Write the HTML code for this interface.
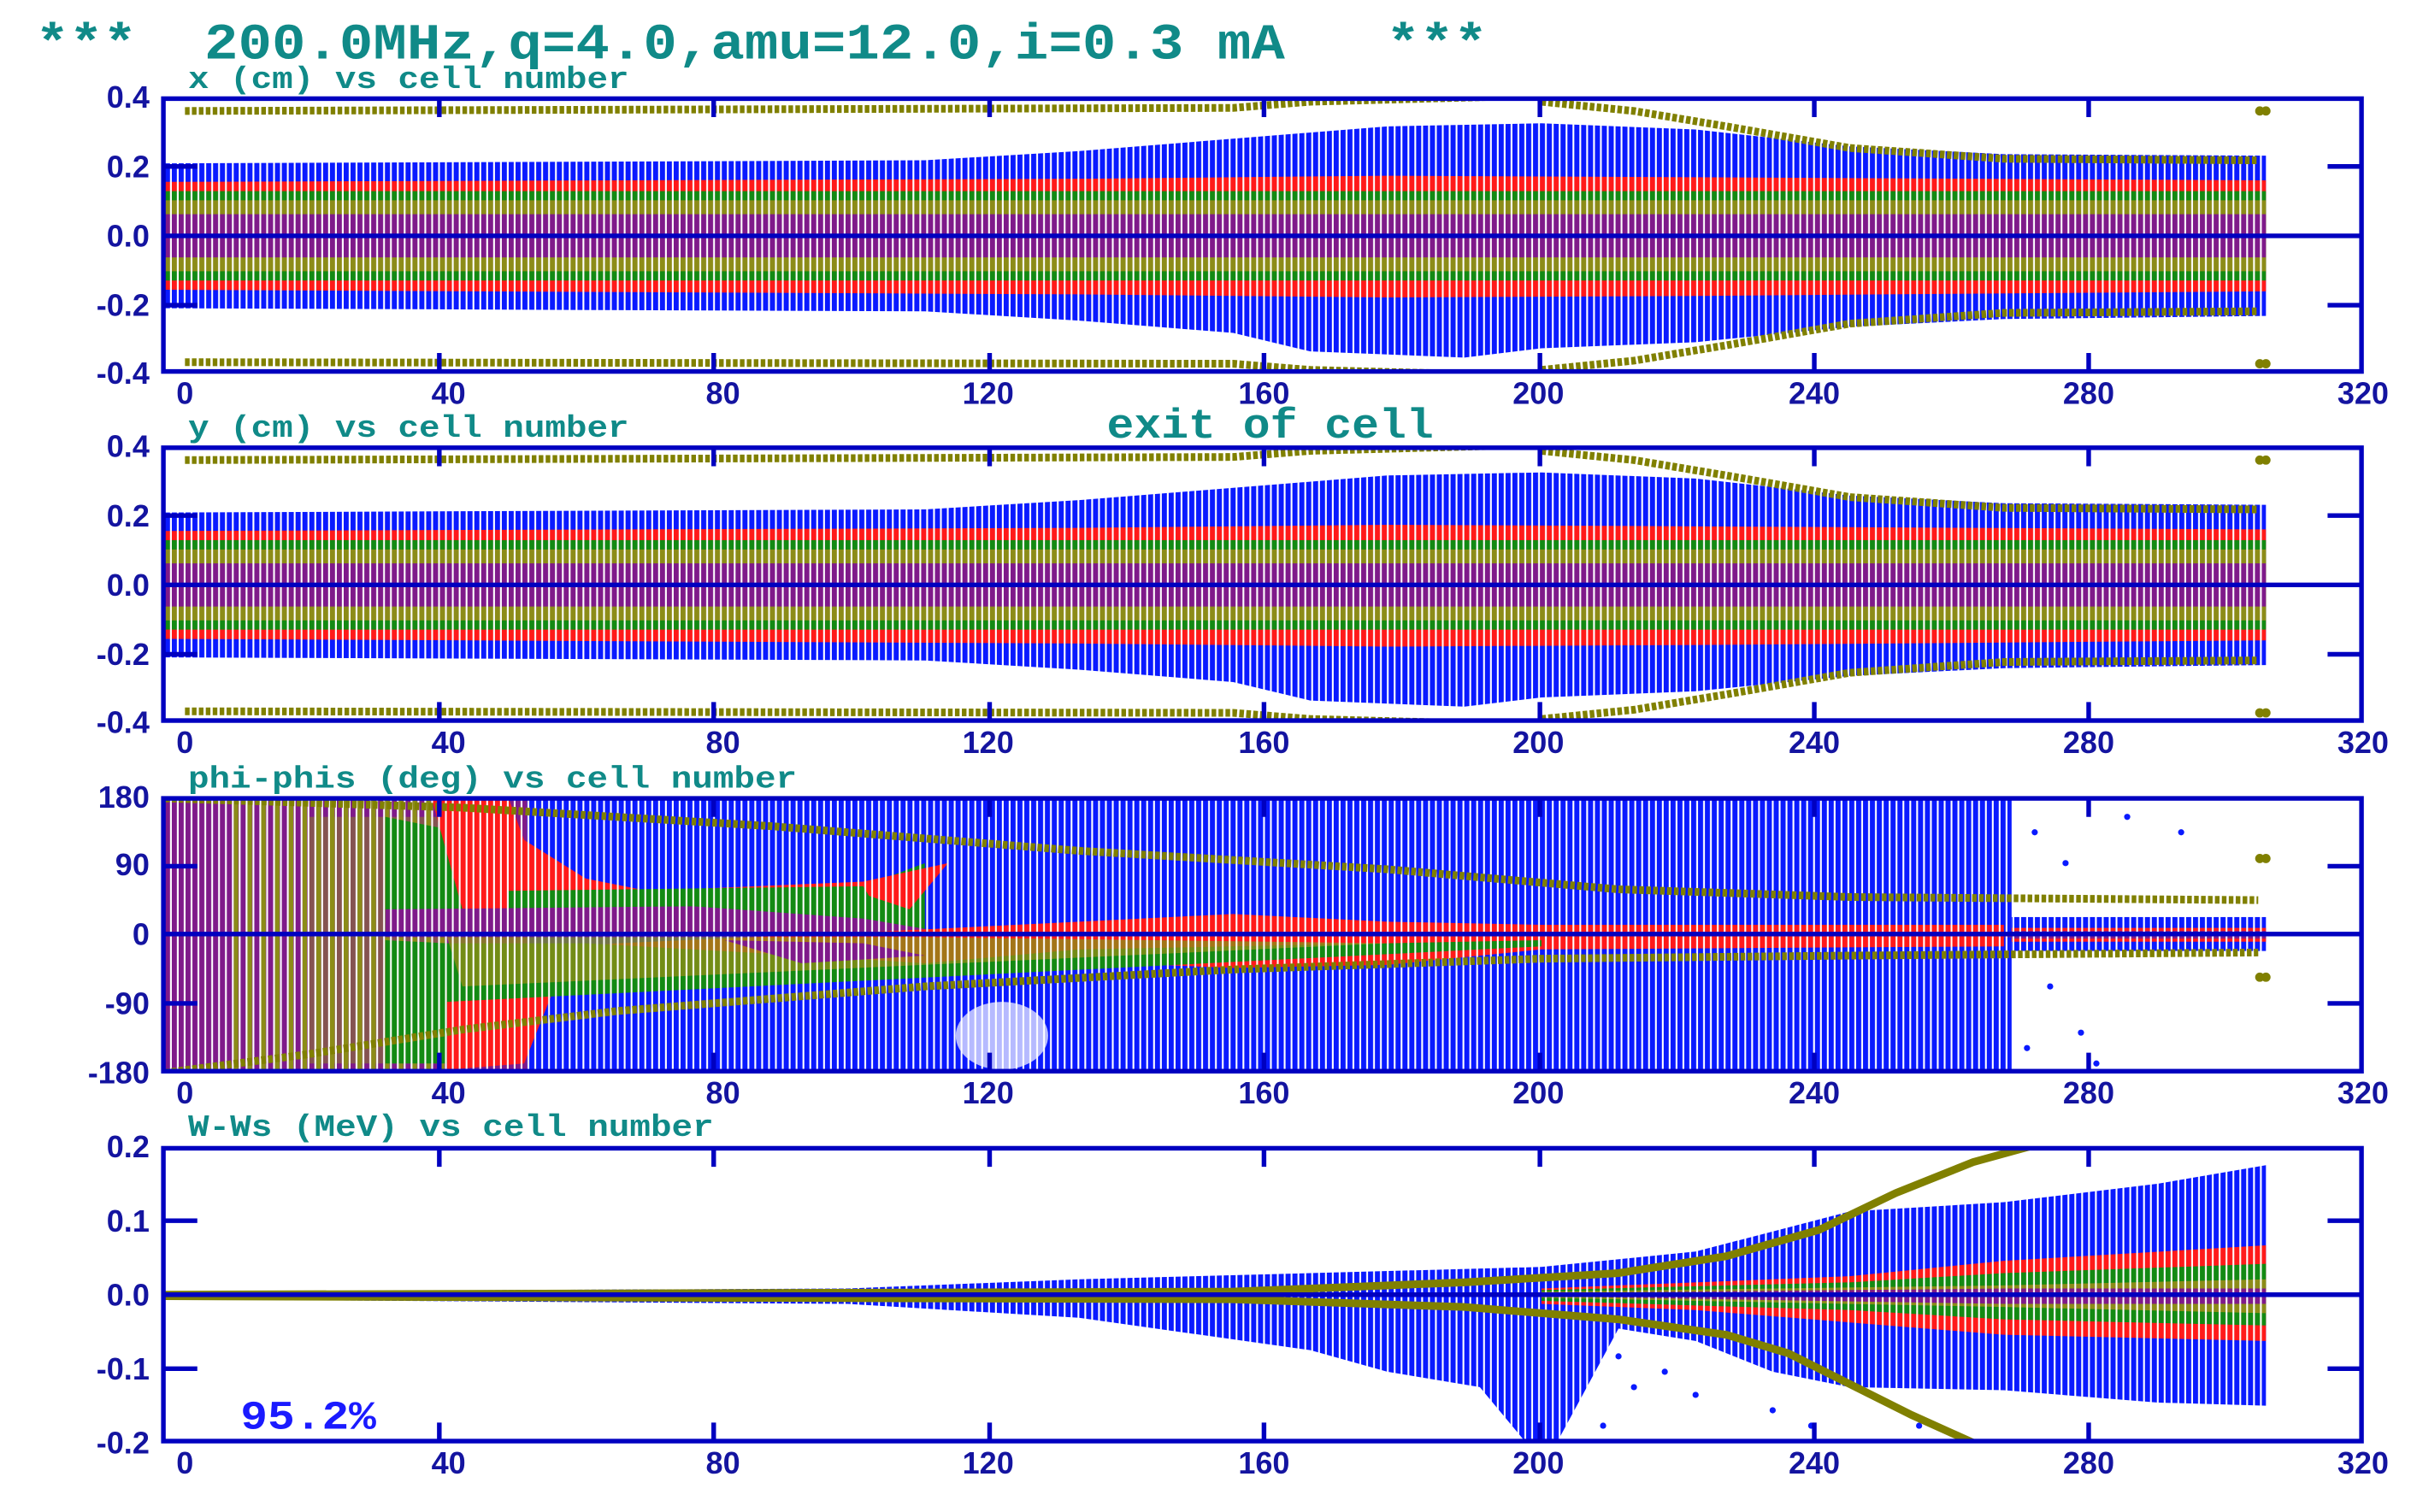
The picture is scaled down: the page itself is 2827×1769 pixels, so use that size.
<!DOCTYPE html>
<html><head><meta charset="utf-8"><style>
html,body{margin:0;padding:0;background:#fff;}
svg{display:block;}
.t{font-family:"Liberation Mono",monospace;font-weight:bold;}
.ax{font-family:"Liberation Sans",sans-serif;font-weight:bold;fill:#1414a0;font-size:20px;}
.st{font-family:"Liberation Mono",monospace;font-weight:bold;fill:#108a88;font-size:20px;}
</style></head><body>
<svg width="2827" height="1769" viewBox="0 0 1568 981" preserveAspectRatio="none" xmlns="http://www.w3.org/2000/svg">
<defs>
<pattern id="wst" x="107" y="0" width="4.46" height="10" patternUnits="userSpaceOnUse">
<rect x="3.3" y="0" width="1.16" height="10" fill="#fff"/>
</pattern>
<pattern id="ost" x="107" y="0" width="8.92" height="10" patternUnits="userSpaceOnUse">
<rect x="0" y="0" width="3" height="10" fill="#8c8c18"/>
</pattern>
<clipPath id="c1"><rect x="106" y="64" width="1426" height="177"/></clipPath>
<clipPath id="c3"><rect x="106" y="518" width="1426" height="177"/></clipPath>
<clipPath id="c4"><rect x="106" y="745" width="1426" height="190"/></clipPath>
<g id="xybands">
<path fill="#0a1aff" d="M107,106 L600,104 L700,98 L800,90 L900,82 L1000,80 L1100,84 L1200,95 L1300,100 L1470,101 L1470,205 L1300,207 L1200,212 L1100,222 L1000,226 L950,232 L850,228 L800,216 L700,208 L600,202 L107,200Z"/>
<path fill="#ff1a1a" d="M107,118 L700,116 L900,114 L1100,115 L1470,117 L1470,189 L1100,192 L900,193 L700,191 L107,188Z"/>
<path fill="#138a13" d="M107,124 L1470,124 L1470,182 L107,182Z"/>
<path fill="#8c8c18" d="M107,130 L1470,130 L1470,176 L107,176Z"/>
<path fill="#7f1a8a" d="M107,139 L1470,139 L1470,167 L107,167Z"/>
<rect x="107" y="60" width="1365" height="190" fill="url(#wst)"/>
<path fill="none" stroke="#808000" stroke-width="5" stroke-dasharray="3 1.5" d="M120,72 L800,70 L850,66 L1000,62 M1000,66 L1060,72 L1120,82 L1200,96 L1300,103 L1465,104"/>
<path fill="none" stroke="#808000" stroke-width="5" stroke-dasharray="3 1.5" d="M120,235 L800,236 L850,240 L1000,244 M1000,240 L1060,234 L1120,224 L1200,210 L1300,203 L1465,202"/>
<circle cx="1466" cy="72" r="3" fill="#808000"/><circle cx="1470" cy="72" r="3" fill="#808000"/>
<circle cx="1466" cy="236" r="3" fill="#808000"/><circle cx="1470" cy="236" r="3" fill="#808000"/>
</g>
<g id="frame">
<rect x="106" y="64" width="1426" height="177" fill="none" stroke="#0000c0" stroke-width="3"/>
<path stroke="#0000c0" stroke-width="3" d="M106,153 H1532 M285,64 v12 M463,64 v12 M642,64 v12 M820,64 v12 M999,64 v12 M1177,64 v12 M1355,64 v12 M285,241 v-12 M463,241 v-12 M642,241 v-12 M820,241 v-12 M999,241 v-12 M1177,241 v-12 M1355,241 v-12 M106,108 h22 M106,198 h22 M1532,108 h-22 M1532,198 h-22"/>
</g>
</defs>

<text class="t" x="23" y="38" font-size="33" fill="#108a88" xml:space="preserve" textLength="942" lengthAdjust="spacingAndGlyphs">***  200.0MHz,q=4.0,amu=12.0,i=0.3 mA   ***</text>

<!-- Panel 1 -->
<g clip-path="url(#c1)"><use href="#xybands"/></g>
<use href="#frame"/>
<text class="st" x="122" y="57" textLength="286" lengthAdjust="spacingAndGlyphs">x (cm) vs cell number</text>
<g class="ax" text-anchor="end"><text x="97" y="70">0.4</text><text x="97" y="115">0.2</text><text x="97" y="160">0.0</text><text x="97" y="205">-0.2</text><text x="97" y="249">-0.4</text></g>
<g class="ax" text-anchor="middle"><text x="120" y="262">0</text><text x="291" y="262">40</text><text x="469" y="262">80</text><text x="641" y="262">120</text><text x="820" y="262">160</text><text x="998" y="262">200</text><text x="1177" y="262">240</text><text x="1355" y="262">280</text><text x="1533" y="262">320</text></g>

<!-- Panel 2 -->
<g transform="translate(0,226.5)">
<g clip-path="url(#c1)"><use href="#xybands"/></g>
<use href="#frame"/>
<text class="st" x="122" y="57" textLength="286" lengthAdjust="spacingAndGlyphs">y (cm) vs cell number</text>
<g class="ax" text-anchor="end"><text x="97" y="70">0.4</text><text x="97" y="115">0.2</text><text x="97" y="160">0.0</text><text x="97" y="205">-0.2</text><text x="97" y="249">-0.4</text></g>
<g class="ax" text-anchor="middle"><text x="120" y="262">0</text><text x="291" y="262">40</text><text x="469" y="262">80</text><text x="641" y="262">120</text><text x="820" y="262">160</text><text x="998" y="262">200</text><text x="1177" y="262">240</text><text x="1355" y="262">280</text><text x="1533" y="262">320</text></g>
</g>
<text class="t" x="718" y="284" font-size="27" fill="#108a88" textLength="212" lengthAdjust="spacingAndGlyphs">exit of cell</text>

<!-- Panel 3 -->
<g clip-path="url(#c3)">
<rect x="107" y="518" width="1198" height="178" fill="#0a1aff"/>
<rect x="107" y="518" width="235" height="178" fill="#7f1a8a"/>
<rect x="150" y="518" width="140" height="178" fill="url(#ost)"/>
<path fill="#8c8c18" d="M200,530 L290,530 L290,690 L200,690Z" opacity="0.5"/>
<path fill="#138a13" d="M250,530 L300,540 L340,575 L400,585 L560,575 L600,560 L600,606 L250,606Z"/>
<path fill="#138a13" d="M250,610 L330,614 L300,690 L250,690Z"/>
<path fill="#ff1a1a" d="M280,518 L330,518 L340,545 L380,570 L420,578 L560,572 L615,560 L590,590 L560,580 L440,585 L380,590 L340,600 L300,590Z"/>
<path fill="#138a13" d="M330,578 L560,575 L575,600 L330,606Z"/>
<path fill="#7f1a8a" d="M250,590 L450,588 L560,596 L620,606 L1470,606 L1470,608 L250,608Z"/>
<path fill="#ff1a1a" d="M600,603 L700,598 L800,593 L900,598 L1000,600 L1300,600 L1300,614 L1000,616 L900,626 L800,628 L700,624 L600,630 L560,636 L420,626 L360,640 L340,690 L290,694 L290,640 L340,618 L400,612Z"/>
<path fill="#138a13" d="M290,612 L380,612 L520,620 L600,625 L700,616 L900,612 L1000,610 L1000,614 L290,650Z"/>
<path fill="#8c8c18" d="M290,608 L600,608 L900,612 L300,640Z" opacity="0.8"/>
<path fill="#7f1a8a" d="M470,610 L560,612 L600,620 L520,625Z"/>
<rect x="1305" y="595" width="165" height="22" fill="#0a1aff"/>
<path fill="#ff1a1a" d="M1305,602 L1470,602 L1470,611 L1305,611Z"/>
<path fill="#7f1a8a" d="M1305,604 L1470,604 L1470,609 L1305,609Z"/>
<rect x="107" y="515" width="1365" height="185" fill="url(#wst)"/>
<g fill="#fff" opacity="0.7"><ellipse cx="650" cy="672" rx="30" ry="22"/></g>
<g fill="#0a1aff"><circle cx="1320" cy="540" r="2"/><circle cx="1340" cy="560" r="2"/><circle cx="1330" cy="640" r="2"/><circle cx="1350" cy="670" r="2"/><circle cx="1380" cy="530" r="2"/><circle cx="1415" cy="540" r="2"/><circle cx="1360" cy="690" r="2"/><circle cx="1315" cy="680" r="2"/></g>
<path fill="none" stroke="#808000" stroke-width="5" stroke-dasharray="3 1.5" d="M107,518 L300,524 L500,536 L700,552 L900,564 L1050,577 L1200,582 L1465,584"/>
<path fill="none" stroke="#808000" stroke-width="5" stroke-dasharray="3 1.5" d="M107,696 L200,684 L300,668 L400,656 L600,640 L800,629 L1000,622 L1200,620 L1465,618"/>
<circle cx="1466" cy="557" r="3" fill="#808000"/><circle cx="1470" cy="557" r="3" fill="#808000"/>
<circle cx="1466" cy="634" r="3" fill="#808000"/><circle cx="1470" cy="634" r="3" fill="#808000"/>
</g>
<rect x="106" y="518" width="1426" height="177" fill="none" stroke="#0000c0" stroke-width="3"/>
<path stroke="#0000c0" stroke-width="3" d="M106,606 H1532 M285,518 v12 M463,518 v12 M642,518 v12 M820,518 v12 M999,518 v12 M1177,518 v12 M1355,518 v12 M285,695 v-12 M463,695 v-12 M642,695 v-12 M820,695 v-12 M999,695 v-12 M1177,695 v-12 M1355,695 v-12 M106,562 h22 M106,651 h22 M1532,562 h-22 M1532,651 h-22"/>
<text class="st" x="122" y="511" textLength="395" lengthAdjust="spacingAndGlyphs">phi-phis (deg) vs cell number</text>
<g class="ax" text-anchor="end"><text x="97" y="524">180</text><text x="97" y="568">90</text><text x="97" y="613">0</text><text x="97" y="658">-90</text><text x="97" y="703">-180</text></g>
<g class="ax" text-anchor="middle"><text x="120" y="716">0</text><text x="291" y="716">40</text><text x="469" y="716">80</text><text x="641" y="716">120</text><text x="820" y="716">160</text><text x="998" y="716">200</text><text x="1177" y="716">240</text><text x="1355" y="716">280</text><text x="1533" y="716">320</text></g>

<!-- Panel 4 -->
<g clip-path="url(#c4)">
<path fill="#0a1aff" d="M107,838 L550,836 L700,830 L850,826 L1000,822 L1100,812 L1200,786 L1300,780 L1400,768 L1470,756 L1470,912 L1400,910 L1300,902 L1200,900 L1150,890 L1100,870 L1050,862 L1010,936 L990,936 L960,900 L900,890 L850,876 L700,855 L550,846 L107,843Z"/>
<path fill="#ff1a1a" d="M1000,836 L1100,832 L1200,828 L1300,818 L1470,808 L1470,870 L1300,866 L1200,858 L1100,850 L1000,846Z"/>
<path fill="#138a13" d="M1000,837 L1200,832 L1300,826 L1470,820 L1470,860 L1300,856 L1200,850 L1000,844Z"/>
<path fill="#8c8c18" d="M1000,838 L1300,834 L1470,830 L1470,852 L1300,848 L1000,842Z"/>
<path fill="#7f1a8a" d="M1000,839 L1300,836 L1470,836 L1470,846 L1300,846 L1000,841Z"/>
<rect x="107" y="740" width="1365" height="200" fill="url(#wst)"/>
<g fill="#0a1aff"><circle cx="1050" cy="880" r="2"/><circle cx="1060" cy="900" r="2"/><circle cx="1080" cy="890" r="2"/><circle cx="1100" cy="905" r="2"/><circle cx="1150" cy="915" r="2"/><circle cx="1175" cy="925" r="2"/><circle cx="1040" cy="925" r="2"/><circle cx="1245" cy="925" r="2"/></g>
<path fill="none" stroke="#808000" stroke-width="5" d="M107,840 L800,838 L950,832 L1050,826 L1120,815 L1180,798 L1230,774 L1280,754 L1320,743"/>
<path fill="none" stroke="#808000" stroke-width="5" d="M107,841 L800,843 L950,848 L1050,856 L1120,866 L1160,878 L1200,898 L1240,918 L1280,936"/>
</g>
<rect x="106" y="745" width="1426" height="190" fill="none" stroke="#0000c0" stroke-width="3"/>
<path stroke="#0000c0" stroke-width="3" d="M106,840 H1532 M285,745 v12 M463,745 v12 M642,745 v12 M820,745 v12 M999,745 v12 M1177,745 v12 M1355,745 v12 M285,935 v-12 M463,935 v-12 M642,935 v-12 M820,935 v-12 M999,935 v-12 M1177,935 v-12 M1355,935 v-12 M106,792 h22 M106,888 h22 M1532,792 h-22 M1532,888 h-22"/>
<text class="st" x="122" y="737" textLength="341" lengthAdjust="spacingAndGlyphs">W-Ws (MeV) vs cell number</text>
<g class="ax" text-anchor="end"><text x="97" y="751">0.2</text><text x="97" y="799">0.1</text><text x="97" y="847">0.0</text><text x="97" y="895">-0.1</text><text x="97" y="943">-0.2</text></g>
<g class="ax" text-anchor="middle"><text x="120" y="956">0</text><text x="291" y="956">40</text><text x="469" y="956">80</text><text x="641" y="956">120</text><text x="820" y="956">160</text><text x="998" y="956">200</text><text x="1177" y="956">240</text><text x="1355" y="956">280</text><text x="1533" y="956">320</text></g>
<text x="156" y="927" font-family="Liberation Mono, monospace" font-weight="bold" font-size="26" fill="#1a1aff" textLength="88" lengthAdjust="spacingAndGlyphs">95.2%</text>
</svg>
</body></html>
